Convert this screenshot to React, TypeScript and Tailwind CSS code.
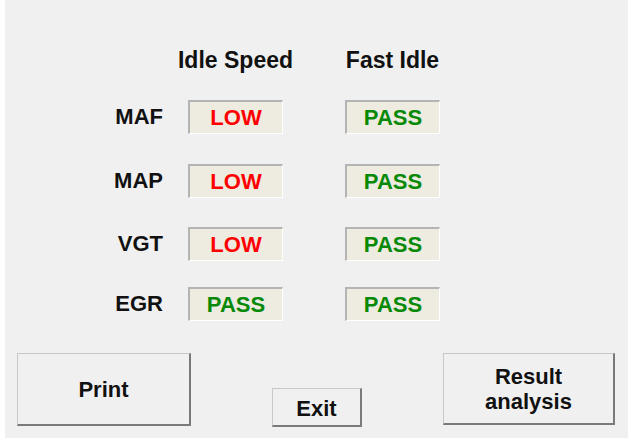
const font = { fontFamily: '"Liberation Sans", Arial, sans-serif' };

type Result = "LOW" | "PASS";

const rows: { name: string; idle: Result; fast: Result; mt: string }[] = [
  { name: "MAF", idle: "LOW", fast: "PASS", mt: "mt-[27px]" },
  { name: "MAP", idle: "LOW", fast: "PASS", mt: "mt-[30px]" },
  { name: "VGT", idle: "LOW", fast: "PASS", mt: "mt-[29px]" },
  { name: "EGR", idle: "PASS", fast: "PASS", mt: "mt-[26px]" },
];

function ResultBox({ value }: { value: Result }) {
  return (
    <div
      className={`flex h-[34px] w-[95px] items-center justify-center border-t-2 border-l-2 border-r border-b border-t-[#b4b4b4] border-l-[#b4b4b4] border-r-white border-b-white bg-[#eeebe0] text-[22px] font-bold leading-none ${
        value === "LOW" ? "text-[#ff0000]" : "text-[#088a08]"
      }`}
    >
      {value}
    </div>
  );
}

function WinButton({ className, children }: { className: string; children: React.ReactNode }) {
  return (
    <button
      className={`flex flex-col items-center justify-center border-t border-l border-t-[#c8c8c8] border-l-[#c8c8c8] border-r-2 border-b-2 border-r-[#7a7a7a] border-b-[#7a7a7a] bg-[#f0f0f0] text-[22px] font-bold leading-[25px] text-[#111] ${className}`}
    >
      {children}
    </button>
  );
}

export default function App() {
  return (
    <div className="h-[447px] w-[631px] bg-white" style={font}>
      <div className="ml-[5px] flex h-[438px] w-[623px] flex-col bg-[#f0f0f0]">
        <div className="mt-[47px] flex text-[23px] font-bold leading-[26px] text-[#111]">
          <div className="ml-[183px] flex w-[95px] justify-center whitespace-nowrap">Idle Speed</div>
          <div className="ml-[62px] flex w-[95px] justify-center whitespace-nowrap">Fast Idle</div>
        </div>

        {rows.map((r) => (
          <div key={r.name} className={`flex items-center ${r.mt}`}>
            <div className="ml-[95px] w-[63px] text-right text-[22px] font-bold leading-none text-[#111]">
              {r.name}
            </div>
            <div className="ml-[25px]">
              <ResultBox value={r.idle} />
            </div>
            <div className="ml-[62px]">
              <ResultBox value={r.fast} />
            </div>
          </div>
        ))}

        <div className="mt-auto mb-[12px] flex items-end justify-between pl-[12px] pr-[13px]">
          <WinButton className="h-[73px] w-[174px]">Print</WinButton>
          <WinButton className="mb-[-1px] h-[39px] w-[90px] pt-[3px]">Exit</WinButton>
          <WinButton className="mb-[1px] h-[72px] w-[172px]">
            <span>Result</span>
            <span>analysis</span>
          </WinButton>
        </div>
      </div>
    </div>
  );
}
